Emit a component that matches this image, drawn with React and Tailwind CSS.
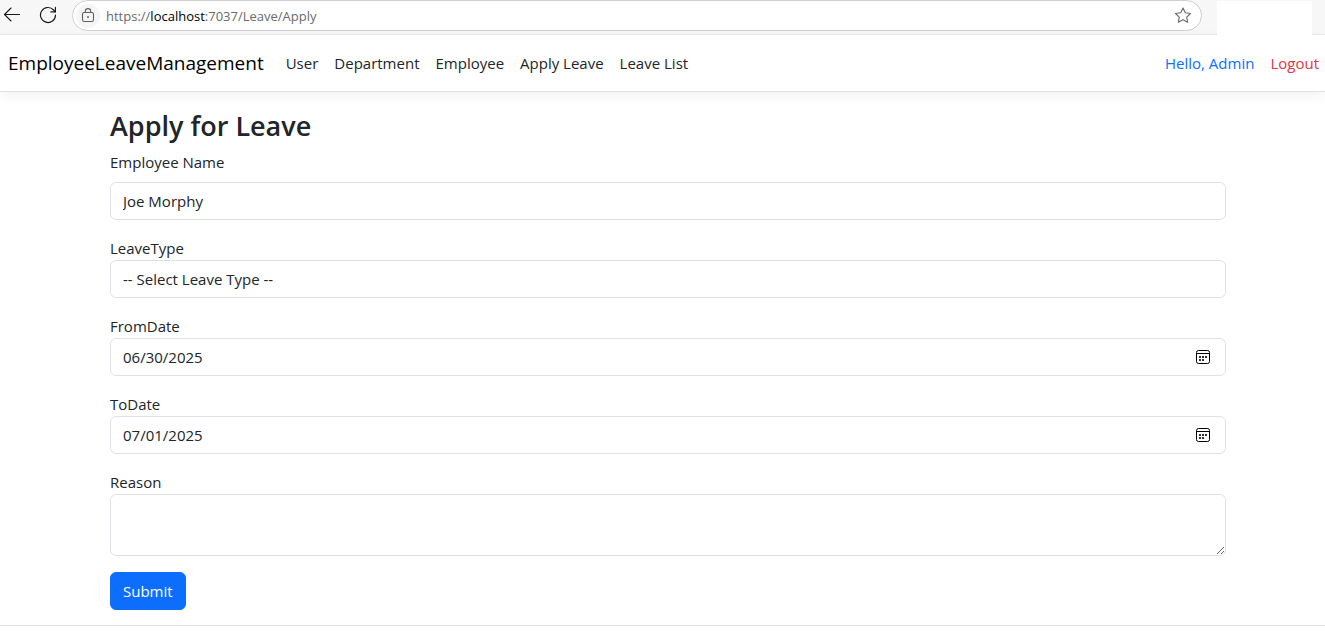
import React from "react";

const control =
  "block w-full rounded-md border border-[#dee2e6] bg-white px-3 text-[15px] leading-6 text-[#212529] outline-none focus:border-[#86b7fe]";

const navItems = ["User", "Department", "Employee", "Apply Leave", "Leave List"];

function BackIcon() {
  return (
    <svg width="18" height="18" viewBox="0 0 18 18" fill="none" stroke="#1b1b1b" strokeWidth="1.1" strokeLinecap="round" strokeLinejoin="round">
      <path d="M16.5 8.5H1.5M8 2 1.5 8.5l6.5 6.5" />
    </svg>
  );
}

function ReloadIcon() {
  return (
    <svg width="18" height="18" viewBox="0 0 18 18" fill="none" stroke="#1b1b1b" strokeWidth="1.2" strokeLinecap="round" strokeLinejoin="round">
      <path d="M16.5 9A7.5 7.5 0 1 1 14.6 4L16.2 5.8" />
      <path d="M16.4 1.4v4.5h-4.5" />
    </svg>
  );
}

function LockIcon() {
  return (
    <svg width="14" height="16" viewBox="0 0 14 16" fill="none" stroke="#5f5f5f" strokeWidth="1.1">
      <rect x="1.5" y="4.5" width="11" height="9" rx="1.8" />
      <path d="M4.3 4.5V3.3a2.7 2.7 0 0 1 5.4 0v1.2" />
      <circle cx="7" cy="9" r="0.9" fill="#5f5f5f" stroke="none" />
    </svg>
  );
}

function StarIcon() {
  return (
    <svg width="18" height="18" viewBox="0 0 18 18" fill="none" stroke="#6b6b6b" strokeWidth="1.1" strokeLinejoin="round">
      <path d="M9 1l2.3 4.8 5.2.7-3.8 3.6 1 5.2L9 12.8 4.3 15.3l1-5.2L1.5 6.5l5.2-.7z" />
    </svg>
  );
}

function CalendarIcon() {
  return (
    <svg className="pointer-events-none absolute right-4 top-3" width="14" height="14" viewBox="0 0 14 14" fill="none" stroke="#000" strokeWidth="1">
      <rect x="0.5" y="0.5" width="13" height="13" rx="2" />
      <path d="M0.5 3.5h13" />
      <path d="M3 6h2v2H3zM6 6h2v2H6zM9 6h2v2H9zM3 9h2v2H3zM6 9h2v2H6z" fill="#333" stroke="none" />
    </svg>
  );
}

function BrowserBar() {
  return (
    <div className="flex h-[35px] items-start border-b border-[#e9e9e9] bg-[#f7f7f7] pl-[3px]">
      <button type="button" aria-label="Back" className="mt-[6px]"><BackIcon /></button>
      <button type="button" aria-label="Reload" className="ml-[18px] mt-[6px]"><ReloadIcon /></button>
      <div className="ml-[15px] flex h-[31px] flex-1 items-center rounded-full border border-[#cfcfcf] bg-white pl-[3px] pr-[9px]">
        <span className="flex size-6 items-center justify-center rounded-full bg-[#f5f5f5]"><LockIcon /></span>
        <p className="ml-[6px] flex-1 text-[13px] leading-5 text-[#6b6b6b]">
          https://<span className="text-black">localhost</span>:7037/Leave/Apply
        </p>
        <button type="button" aria-label="Add to favorites"><StarIcon /></button>
      </div>
      <div className="ml-[15px] mr-[13px] mt-px h-[34px] w-[95px] bg-white" />
    </div>
  );
}

function DateField({ id, label, value }) {
  return (
    <div>
      <label htmlFor={id} className="block">{label}</label>
      <div className="relative">
        <input
          id={id}
          type="date"
          defaultValue={value}
          className={`${control} h-[38px] [&::-webkit-calendar-picker-indicator]:opacity-0 [&::-webkit-datetime-edit-day-field]:p-0 [&::-webkit-datetime-edit-fields-wrapper]:p-0 [&::-webkit-datetime-edit-month-field]:p-0 [&::-webkit-datetime-edit-year-field]:p-0 [&::-webkit-datetime-edit]:p-0`}
        />
        <CalendarIcon />
      </div>
    </div>
  );
}

export default function App() {
  return (
    <div className="bg-white font-['Open_Sans',sans-serif] text-[15px] leading-6 text-[#212529]">
      <BrowserBar />
      <header>
        <nav className="flex h-[57px] items-center border-b border-[#dee2e6] pl-2 pr-[6px] shadow-[0_4px_12px_rgba(0,0,0,0.05)]">
          <a href="#home" className="mr-[22px] text-[19px] text-black">EmployeeLeaveManagement</a>
          <ul className="flex flex-1 gap-4">
            {navItems.map((item) => (
              <li key={item}><a href="#nav">{item}</a></li>
            ))}
          </ul>
          <div className="flex gap-4">
            <a href="#account" className="text-[#0d6efd]">Hello, Admin</a>
            <a href="#logout" className="text-[#dc3545]">Logout</a>
          </div>
        </nav>
      </header>
      <div className="flex justify-center pl-[11px]">
        <main className="w-full max-w-[1116px] pt-4">
          <h1 className="mb-[6px] text-[27px] font-semibold leading-9">Apply for Leave</h1>
          <form className="flex flex-col gap-4" onSubmit={(e) => e.preventDefault()}>
            <div>
              <label htmlFor="name" className="mb-2 block">Employee Name</label>
              <input id="name" type="text" defaultValue="Joe Morphy" className={`${control} h-[38px]`} />
            </div>
            <div>
              <label htmlFor="type" className="block">LeaveType</label>
              <select id="type" className={`${control} h-[38px] appearance-none`}>
                <option>-- Select Leave Type --</option>
              </select>
            </div>
            <DateField id="from" label="FromDate" value="2025-06-30" />
            <DateField id="to" label="ToDate" value="2025-07-01" />
            <div>
              <label htmlFor="reason" className="block">Reason</label>
              <textarea id="reason" className={`${control} h-[62px] resize-y py-[6px]`} />
            </div>
            <button type="submit" className="h-[38px] self-start rounded-md border border-[#0d6efd] bg-[#0d6efd] px-3 text-white">Submit</button>
          </form>
        </main>
      </div>
      <footer className="mt-[15px] h-[6px] border-t border-[#dee2e6]" />
    </div>
  );
}
